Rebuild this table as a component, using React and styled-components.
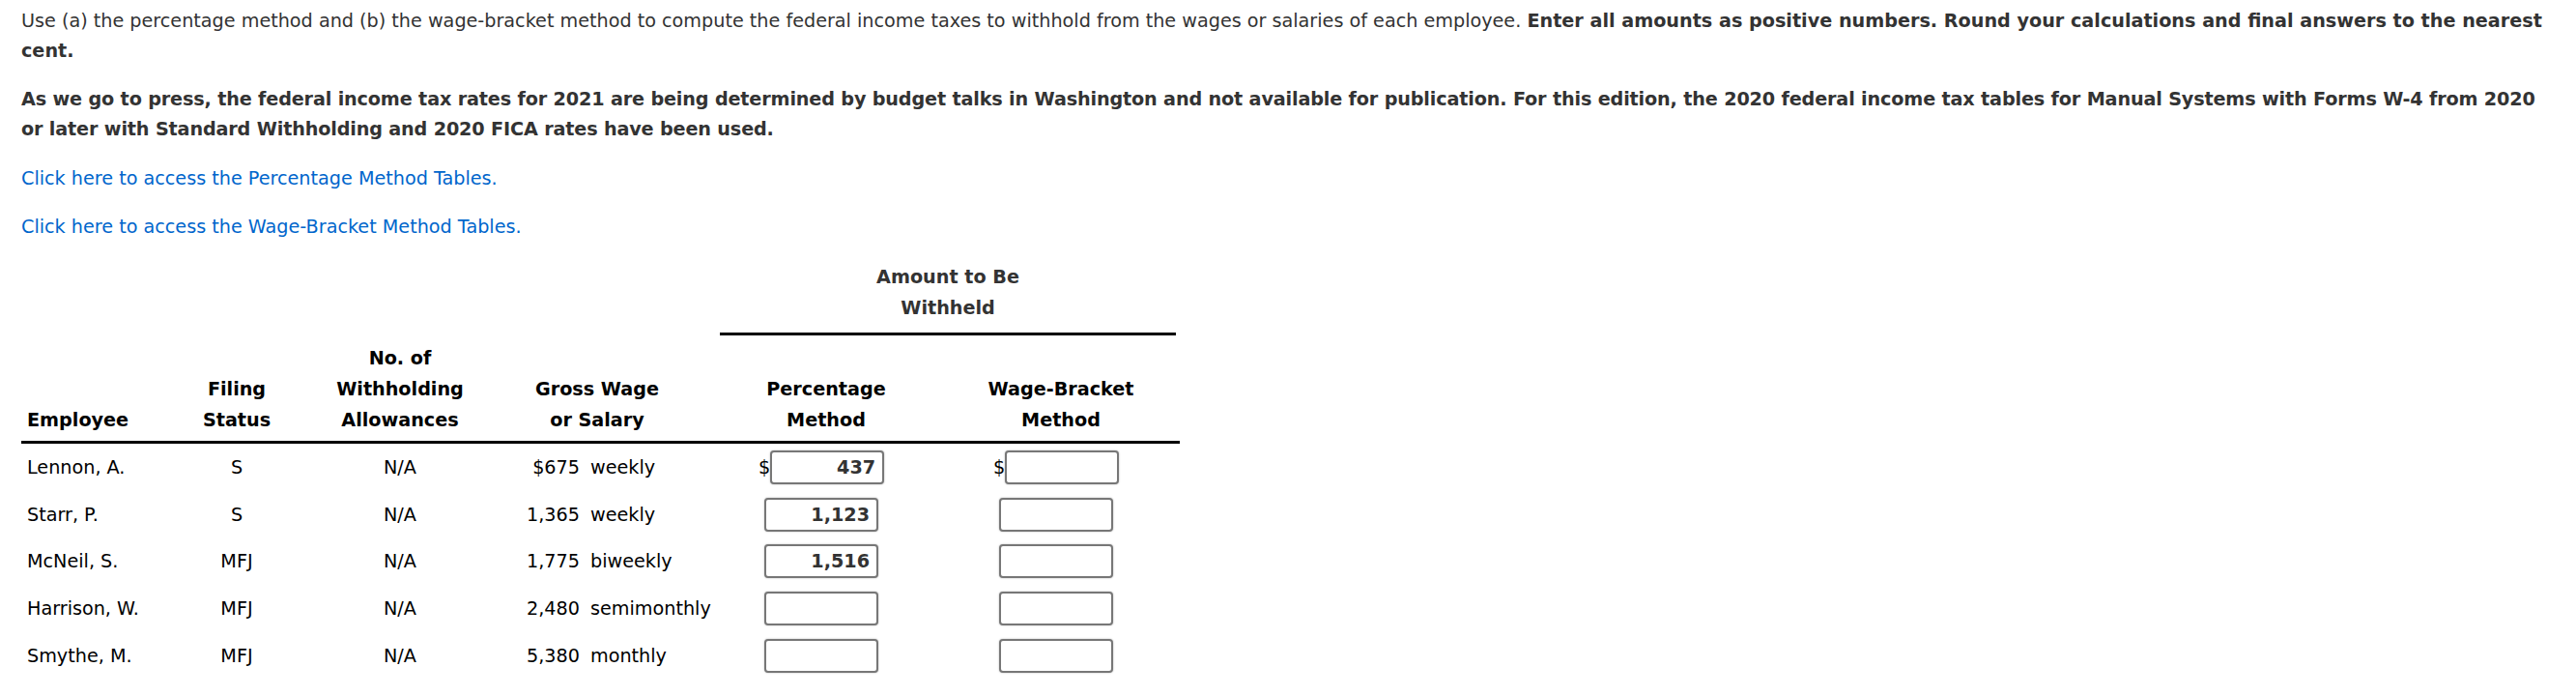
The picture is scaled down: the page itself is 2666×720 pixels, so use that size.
import React from "react";
import styled, { createGlobalStyle } from "styled-components";

const Global = createGlobalStyle`
  html, body { margin: 0; padding: 0; background: #fff; }
  body { font-family: "DejaVu Sans", Verdana, sans-serif; }
`;

const COLS = "168px 110px 228px 217px 220px 256px";

const Page = styled.div`
  padding: 5.5px 14px 20px 22px;
  font-size: 19.2px;
  line-height: 31.2px;
  color: #333;
`;

const Para = styled.p`
  margin: 0 0 19.2px;
  font-weight: ${(p) => (p.$bold ? "bold" : "normal")};
  letter-spacing: ${(p) => (p.$bold ? "-0.15px" : "normal")};
`;

const Link = styled.a`
  color: #0066cc;
  text-decoration: none;
  cursor: pointer;
`;

const HeaderGrid = styled.div`
  display: grid;
  grid-template-columns: ${COLS};
  width: 1199px;
  line-height: 32px;
`;

const GroupHeader = styled.div`
  grid-column: 5 / 7;
  grid-row: 1;
  margin-right: 4px;
  padding: 1.5px 0 9px;
  border-bottom: 3px solid #000;
  text-align: center;
  font-weight: bold;
  color: #333;
`;

const HeadCell = styled.div`
  grid-row: 2;
  grid-column: ${(p) => p.$col};
  display: flex;
  flex-direction: column;
  justify-content: flex-end;
  text-align: ${(p) => p.$align || "center"};
  padding: 8.5px ${(p) => p.$pr || 0}px 5px ${(p) => p.$pl || 0}px;
  border-bottom: 3px solid #000;
  font-weight: bold;
  color: #000;
`;

const BodyRow = styled.div`
  display: grid;
  grid-template-columns: ${COLS};
  width: 1199px;
  height: 48.6px;
  align-items: center;
  color: #000;
`;

const Cell = styled.div`
  text-align: ${(p) => p.$align || "center"};
  padding-left: ${(p) => p.$pl || 0}px;
  white-space: nowrap;
`;

const WageCell = styled.div`
  display: flex;
  gap: 11px;
  white-space: nowrap;
`;

const WageAmount = styled.span`
  width: 72px;
  text-align: right;
`;

const AnswerCell = styled.div`
  display: flex;
  justify-content: center;
  align-items: center;
  padding-right: ${(p) => p.$pr || 0}px;
`;

const Dollar = styled.span`
  color: #000;
`;

const AnswerInput = styled.input`
  box-sizing: border-box;
  width: 118px;
  height: 35px;
  margin: 0;
  padding: 0 7px;
  border: 2px solid #777;
  border-radius: 4px;
  box-shadow: 0 0 2px rgba(0, 0, 0, 0.3);
  background: #fff;
  font-family: "DejaVu Sans", Verdana, sans-serif;
  font-size: 19.2px;
  font-weight: bold;
  color: #333;
  text-align: right;
  outline: none;
`;

const rows = [
  { name: "Lennon, A.", status: "S", amount: "$675", period: "weekly", pct: "437", first: true },
  { name: "Starr, P.", status: "S", amount: "1,365", period: "weekly", pct: "1,123" },
  { name: "McNeil, S.", status: "MFJ", amount: "1,775", period: "biweekly", pct: "1,516" },
  { name: "Harrison, W.", status: "MFJ", amount: "2,480", period: "semimonthly", pct: "" },
  { name: "Smythe, M.", status: "MFJ", amount: "5,380", period: "monthly", pct: "" },
];

export default function App() {
  return (
    <Page>
      <Global />
      <Para>
        Use (a) the percentage method and (b) the wage-bracket method to compute the federal income
        taxes to withhold from the wages or salaries of each employee.{" "}
        <strong>
          Enter all amounts as positive numbers. Round your calculations and final answers to the
          nearest cent.
        </strong>
      </Para>
      <Para $bold>
        As we go to press, the federal income tax rates for 2021 are being determined by budget talks
        in Washington and not available for publication. For this edition, the 2020 federal income
        tax tables for Manual Systems with Forms W-4 from 2020 or later with Standard Withholding and
        2020 FICA rates have been used.
      </Para>
      <Para>
        <Link>Click here to access the Percentage Method Tables.</Link>
      </Para>
      <Para>
        <Link>Click here to access the Wage-Bracket Method Tables.</Link>
      </Para>

      <HeaderGrid>
        <GroupHeader>
          Amount to Be
          <br />
          Withheld
        </GroupHeader>
        <HeadCell $col={1} $align="left" $pl={6}>
          Employee
        </HeadCell>
        <HeadCell $col={2}>
          <span>Filing</span>
          <span>Status</span>
        </HeadCell>
        <HeadCell $col={3}>
          <span>No. of</span>
          <span>Withholding</span>
          <span>Allowances</span>
        </HeadCell>
        <HeadCell $col={4} $pr={37}>
          <span>Gross Wage</span>
          <span>or Salary</span>
        </HeadCell>
        <HeadCell $col={5}>
          <span>Percentage</span>
          <span>Method</span>
        </HeadCell>
        <HeadCell $col={6} $pl={10}>
          <span>Wage-Bracket</span>
          <span>Method</span>
        </HeadCell>
      </HeaderGrid>

      {rows.map((r) => (
        <BodyRow key={r.name}>
          <Cell $align="left" $pl={6}>
            {r.name}
          </Cell>
          <Cell>{r.status}</Cell>
          <Cell>N/A</Cell>
          <WageCell>
            <WageAmount>{r.amount}</WageAmount>
            <span>{r.period}</span>
          </WageCell>
          <AnswerCell $pr={10}>
            {r.first && <Dollar>$</Dollar>}
            <AnswerInput type="text" defaultValue={r.pct} />
          </AnswerCell>
          <AnswerCell>
            {r.first && <Dollar>$</Dollar>}
            <AnswerInput type="text" defaultValue="" />
          </AnswerCell>
        </BodyRow>
      ))}
    </Page>
  );
}
